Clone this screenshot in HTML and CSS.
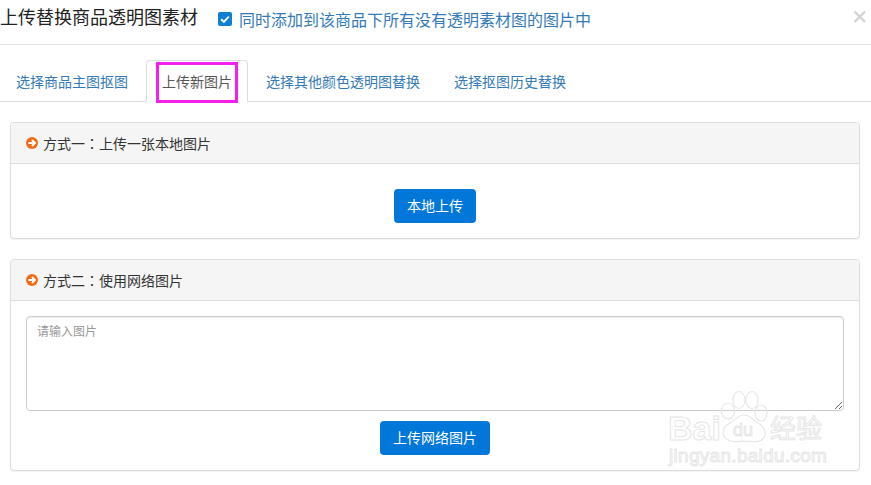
FILE: index.html
```html
<!DOCTYPE html>
<html lang="zh-CN">
<head>
<meta charset="utf-8">
<title>上传替换商品透明图素材</title>
<link rel="stylesheet" href="styles.css">
</head>
<body>
<div class="modal">
  <header class="head">
    <h1 class="title">上传替换商品透明图素材</h1>
    <label class="check">
      <span class="box"><svg viewBox="0 0 14 14" width="14" height="14"><path d="M3.2 7.2 5.9 9.9 10.8 4.6" fill="none" stroke="#fff" stroke-width="2"/></svg></span>
      <span>同时添加到该商品下所有没有透明素材图的图片中</span>
    </label>
    <svg class="close" viewBox="0 0 13 13" width="13" height="13"><path d="M1.500 1.500 12 12M12 1.500 1.500 12" stroke="#d4d4d4" stroke-width="2.4" fill="none"/></svg>
  </header>
  <nav class="tabs">
    <a class="tab">选择商品主图抠图</a>
    <a class="tab active">上传新图片<span class="mark"></span></a>
    <a class="tab">选择其他颜色透明图替换</a>
    <a class="tab">选择抠图历史替换</a>
  </nav>
  <main class="body">
    <section class="panel one">
      <div class="panel-head">
        <svg class="arrow" viewBox="0 0 12 12" width="12" height="12"><circle cx="6" cy="6" r="6" fill="#f26a14"/><path d="M2.4 6H8.8M6 3 9 6 6 9" fill="none" stroke="#fff" stroke-width="1.9"/></svg>
        <span>方式一<span class="colon" lang="zh-TW">：</span>上传一张本地图片</span>
      </div>
      <div class="panel-body">
        <button class="btn">本地上传</button>
      </div>
    </section>
    <section class="panel two">
      <div class="panel-head">
        <svg class="arrow" viewBox="0 0 12 12" width="12" height="12"><circle cx="6" cy="6" r="6" fill="#f26a14"/><path d="M2.4 6H8.8M6 3 9 6 6 9" fill="none" stroke="#fff" stroke-width="1.9"/></svg>
        <span>方式二<span class="colon" lang="zh-TW">：</span>使用网络图片</span>
      </div>
      <div class="panel-body form">
        <textarea class="area" placeholder="请输入图片"></textarea>
        <button class="btn">上传网络图片</button>
      </div>
    </section>
  </main>
</div>
<div class="wm" aria-hidden="true">
  <svg class="paw" viewBox="0 0 54 58" width="54" height="58">
    <g fill="none" stroke="#e6e6e6" stroke-width="1.2">
      <ellipse cx="11" cy="23" rx="6.500" ry="8"/>
      <ellipse cx="22" cy="12" rx="6" ry="8.500"/>
      <ellipse cx="35" cy="12" rx="6" ry="8.500"/>
      <ellipse cx="44" cy="25" rx="6" ry="8"/>
      <path d="M27 27C20 27 18 32 13 35 6 39 5 44 7 48 10 53 15 54 20 53.500 25 53 30 53 36 53.500 42 54 47 52 48 47 49 42 46 38 41 35 36 32 33 27 27 27Z"/>
    </g>
  </svg>
  <span class="wm-t bai">Bai</span>
  <span class="wm-t du">du</span>
  <span class="wm-t jy">经验</span>
  <span class="wm-t url">jingyan.baidu.com</span>
</div>
</body>
</html>
```
FILE: styles.css
```css
* { box-sizing: border-box; }
html, body { margin: 0; padding: 0; background: #fff; }
body {
  position: relative;
  width: 871px;
  height: 485px;
  overflow: hidden;
  font-family: "Noto Sans CJK SC", "Liberation Sans", sans-serif;
  font-size: 12px;
  color: #333;
}
.head {
  display: flex;
  align-items: flex-start;
  height: 45px;
  border-bottom: 1px solid #e5e5e5;
}
.title {
  margin: 0;
  font-size: 18px;
  font-weight: 400;
  line-height: 32px;
  color: #222;
}
.check {
  display: flex;
  align-items: center;
  gap: 7px;
  margin: 3px 0 0 20px;
  height: 32px;
  font-size: 16px;
  color: #337ab7;
}
.box {
  display: flex;
  width: 14px;
  height: 14px;
  border-radius: 2px;
  background: #0f7fd3;
}
.close { margin: 10px 5px 0 auto; }
.tabs {
  display: flex;
  height: 57px;
  padding-top: 15px;
  border-bottom: 1px solid #ddd;
}
.tab {
  position: relative;
  height: 42px;
  margin-right: 2px;
  padding: 0 15px;
  border: 1px solid transparent;
  border-radius: 4px 4px 0 0;
  font-size: 14px;
  line-height: 41px;
  color: #337ab7;
}
.tab.active {
  height: 42px;
  border-color: #ddd #ddd #fff;
  background: #fff;
  color: #555;
}
.mark {
  position: absolute;
  left: 9px;
  top: 1px;
  width: 82px;
  height: 41px;
  border: 3px solid #f71ff0;
}
.body {
  display: flex;
  flex-direction: column;
  gap: 20px;
  padding: 20px 11px 0 10px;
}
.panel {
  border: 1px solid #ddd;
  border-radius: 4px;
  box-shadow: 0 1px 1px rgba(0, 0, 0, .05);
  background: #fff;
}
.panel-head {
  display: flex;
  align-items: center;
  gap: 5px;
  height: 41px;
  padding-left: 15px;
  border-bottom: 1px solid #ddd;
  border-radius: 3px 3px 0 0;
  background: #f5f5f5;
  font-size: 14px;
  color: #333;
}
.colon { font-family: "Noto Sans CJK TC", sans-serif; }
.panel-body {
  display: flex;
  justify-content: center;
  align-items: flex-start;
  height: 74px;
  padding-top: 25px;
}
.panel-body.form {
  flex-direction: column;
  justify-content: flex-start;
  align-items: center;
  height: 169px;
  padding: 15px 15px 0;
  gap: 10px;
}
.btn {
  height: 34px;
  padding: 0 13px 2px;
  border: 0;
  border-radius: 4px;
  background: #0077d9;
  color: #fff;
  font: 400 14px "Noto Sans CJK SC", sans-serif;
}
.area {
  display: block;
  width: 100%;
  height: 95px;
  padding: 5px 10px;
  border: 1px solid #ccc;
  border-radius: 4px;
  box-shadow: inset 0 1px 1px rgba(0, 0, 0, .075);
  font: 12px "Noto Sans CJK SC", sans-serif;
  outline: none;
}
.area::placeholder { color: #999; }
.wm {
  position: absolute;
  left: 668px;
  top: 388px;
  width: 160px;
  height: 90px;
}
.paw { position: absolute; left: 49px; top: 0; }
.wm-t {
  position: absolute;
  color: transparent;
  -webkit-text-stroke: 1px #e6e6e6;
  font-family: "Liberation Sans", sans-serif;
  white-space: nowrap;
}
.bai { left: 0; top: 21px; font-size: 34px; font-weight: 700; line-height: 38px; }
.du { left: 65px; top: 31px; font-size: 18px; line-height: 22px; }
.jy { left: 102px; top: 24px; font-size: 26px; line-height: 30px; font-family: "Noto Sans CJK SC", sans-serif; }
.url { left: 1px; top: 56px; font-size: 19px; line-height: 24px; letter-spacing: .3px; }
```
